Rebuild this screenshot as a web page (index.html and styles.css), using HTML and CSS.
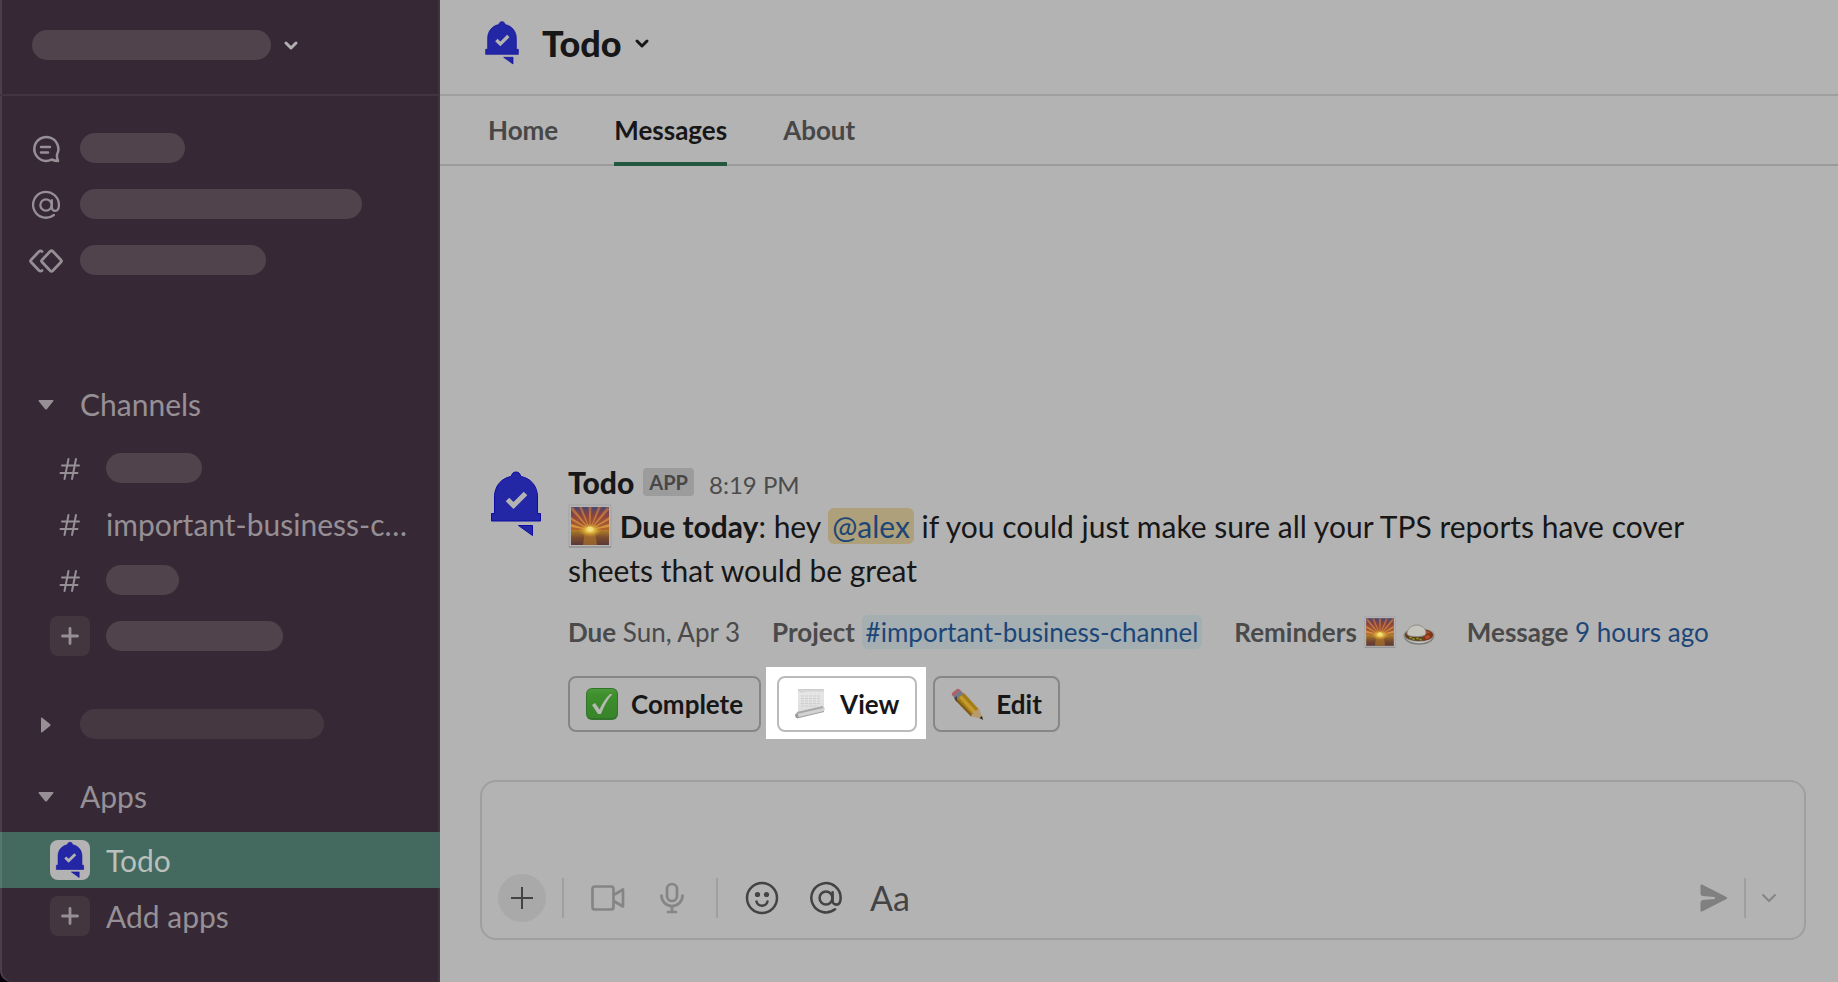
FILE: index.html
```html
<!DOCTYPE html>
<html lang="en">

<head>
    <meta charset="UTF-8">
    <meta name="viewport" content="width=device-width, initial-scale=1.0">
    <title>Todo</title>
    <link rel="stylesheet" href="styles.css">
</head>

<body>
    <!-- shared icons -->
    <svg class="sprite" aria-hidden="true">
        <defs>
            <linearGradient id="sky" x1="0" y1="0" x2="0" y2="1">
                <stop offset="0" stop-color="#47466e" />
                <stop offset=".35" stop-color="#8a4440" />
                <stop offset="1" stop-color="#b5652a" />
            </linearGradient>
            <linearGradient id="rays" gradientUnits="userSpaceOnUse" x1="0" y1="3" x2="0" y2="26">
                <stop offset="0" stop-color="#a0604c" />
                <stop offset=".5" stop-color="#cb7a3a" />
                <stop offset="1" stop-color="#d8a040" />
            </linearGradient>
            <linearGradient id="sea" x1="0" y1="0" x2="0" y2="1">
                <stop offset="0" stop-color="#b08026" />
                <stop offset=".5" stop-color="#7b4c2d" />
                <stop offset="1" stop-color="#5b3838" />
            </linearGradient>
            <radialGradient id="sun">
                <stop offset="0" stop-color="#fff3a0" />
                <stop offset=".4" stop-color="#e0b840" />
                <stop offset="1" stop-color="#c88a2c" stop-opacity="0" />
            </radialGradient>
            <linearGradient id="tick" x1="0" y1="0" x2="0" y2="1">
                <stop offset="0" stop-color="#4c9a3a" />
                <stop offset=".2" stop-color="#3f8f2c" />
                <stop offset="1" stop-color="#37842a" />
            </linearGradient>
            <linearGradient id="paper" x1="0" y1="0" x2="0" y2="1">
                <stop offset="0" stop-color="#c9c9c9" />
                <stop offset=".15" stop-color="#e6e6e6" />
                <stop offset="1" stop-color="#dcdcdc" />
            </linearGradient>
        </defs>
        <symbol id="bell" viewBox="0 0 72 72">
            <path d="M36 4c-2.600 0-4.500 1.800-4.500 4.400C21.500 10 14.500 18 14.500 29v16.500h-3V53h49v-7.500h-3V29C57.500 18 50.500 10 40.500 8.400 40.500 5.800 38.600 4 36 4z" fill="#2327a5" stroke="#0d0ba3" />
            <path d="M38.500 57.500h14v10z" fill="#2327a5" stroke="#0d0ba3" />
            <path d="M27.500 31.500l6 6 12-12" fill="none" stroke="#b3b3b3" stroke-width="5" />
        </symbol>
        <symbol id="chevron" viewBox="0 0 16 16">
            <path d="M3 6l5 5 5-5" fill="none" stroke="currentColor" stroke-width="3" stroke-linecap="round" stroke-linejoin="round" />
        </symbol>
        <symbol id="caret" viewBox="0 0 16 16">
            <path d="M1.300 3h13.400q1.300 0 .5 1.200L9 12q-1 1.200-2 0L.8 4.200Q0 3 1.300 3z" fill="currentColor" />
        </symbol>
        <symbol id="at" viewBox="0 0 36 36">
            <g fill="none" stroke="currentColor" stroke-width="2.700" stroke-linecap="round">
                <circle cx="18" cy="18" r="6.800" />
                <path d="M25 12v9a4 4 0 0 0 4 4c3 0 4.500-3 4.500-7a15.500 15.500 0 1 0-6 12" />
            </g>
        </symbol>
        <symbol id="hash" viewBox="0 0 24 24">
            <path d="M10.500 2L6.500 22M18 2l-4 20M4 8.500h17M2.500 16h17" fill="none" stroke="currentColor" stroke-width="2" stroke-linecap="round" />
        </symbol>
        <symbol id="plus" viewBox="0 0 24 24">
            <path d="M12 4.500v15M4.500 12h15" fill="none" stroke="currentColor" stroke-width="2.800" stroke-linecap="round" />
        </symbol>
        <symbol id="sunrise" viewBox="0 0 44 44">
            <path d="M1 1h42v42H1z" fill="#b6b6b6" stroke="#a2a2a2" />
            <path d="M1 43h42" stroke="#878787" />
            <path d="M3 3h38v23H3z" fill="url(#sky)" />
            <path d="M22 26L3 6V4l2-1zM22 26L11 3h3zM22 26L20.500 3h3zM22 26L30 3h3zM22 26L39 3l2 1v2zM22 26L3 13v3zM22 26L41 13v3zM22 26L3 20v3zM22 26l19-6v3z" fill="url(#rays)" />
            <path d="M3 26h38v15H3z" fill="url(#sea)" />
            <path d="M17 27h10l2 14H15z" fill="#b57c2c" opacity=".6" />
            <ellipse cx="22" cy="26" rx="12" ry="7" fill="url(#sun)" />
            <path d="M18.500 26a3.500 3.500 0 0 1 7 0z" fill="#f2dc7c" />
        </symbol>
    </svg>

    <div class="app">
        <aside class="sidebar">
            <button class="workspace" aria-label="Workspace menu">
                <span class="pill w-239"></span>
                <svg class="icon-16"><use href="#chevron" /></svg>
            </button>

            <nav class="nav">
                <a href="#" class="row" aria-label="Threads">
                    <svg class="icon-36" viewBox="0 0 36 36">
                        <g fill="none" stroke="currentColor" stroke-width="2.500" stroke-linecap="round" stroke-linejoin="round">
                            <path d="M29 23.500a12 12 0 1 0-11 6.500c2.500 0 4-.600 5.500-1.500 2.500 1 4.500 1.500 6.500 1.500-1-2.500-1.500-4.500-1-6.500z" />
                            <path d="M13 16h9M13 21.500h7" />
                        </g>
                    </svg>
                    <span class="pill w-105"></span>
                </a>
                <a href="#" class="row" aria-label="Mentions">
                    <svg class="icon-30"><use href="#at" /></svg>
                    <span class="pill w-282"></span>
                </a>
                <a href="#" class="row" aria-label="Slack Connect">
                    <svg class="icon-36" viewBox="0 0 36 36">
                        <path d="M14 8.500q-1.500-1.500-3 0l-8 8.500q-1 1 0 2l8 8.500q1.500 1.500 3 0M22 8.500q1.500-1.500 3 0l8 8.500q1 1 0 2l-8 8.500q-1.500 1.500-3 0l-8-8.500q-1-1 0-2z" fill="none" stroke="currentColor" stroke-width="2.700" stroke-linecap="round" stroke-linejoin="round" />
                    </svg>
                    <span class="pill w-186"></span>
                </a>
            </nav>

            <section class="section">
                <button class="row heading"><svg class="icon-16"><use href="#caret" /></svg>Channels</button>
                <a href="#" class="row item" aria-label="Channel"><svg class="icon-24"><use href="#hash" /></svg><span class="pill w-96"></span></a>
                <a href="#" class="row item"><svg class="icon-24"><use href="#hash" /></svg><span class="name">important-business-channel</span></a>
                <a href="#" class="row item" aria-label="Channel"><svg class="icon-24"><use href="#hash" /></svg><span class="pill w-73"></span></a>
                <a href="#" class="row item" aria-label="Add channels"><span class="tile"><svg class="icon-24"><use href="#plus" /></svg></span><span class="pill w-177"></span></a>
            </section>

            <section class="section collapsed">
                <button class="row heading" aria-label="Expand section"><svg class="icon-16 closed"><use href="#caret" /></svg><span class="pill faint w-244"></span></button>
            </section>

            <section class="section apps">
                <button class="row heading"><svg class="icon-16"><use href="#caret" /></svg>Apps</button>
                <a href="#" class="row item active"><span class="tile logo"><svg class="icon-40"><use href="#bell" /></svg></span><span class="name">Todo</span></a>
                <a href="#" class="row item"><span class="tile"><svg class="icon-24"><use href="#plus" /></svg></span><span class="name">Add apps</span></a>
            </section>
        </aside>

        <main class="main">
            <header class="header">
                <svg class="icon-48"><use href="#bell" /></svg>
                <button class="title">Todo <svg class="icon-16"><use href="#chevron" /></svg></button>
            </header>

            <nav class="tabs">
                <a href="#" class="tab">Home</a>
                <a href="#" class="tab current">Messages</a>
                <a href="#" class="tab">About</a>
            </nav>

            <div class="messages">
                <article class="message">
                    <svg class="avatar"><use href="#bell" /></svg>
                    <div class="content">
                        <div class="meta">
                            <span class="author">Todo</span>
                            <span class="badge">APP</span>
                            <a href="#" class="time">8:19 PM</a>
                        </div>
                        <p class="text"><svg class="emoji-44"><use href="#sunrise" /></svg> <b>Due today</b>: hey <a href="#" class="mention">@alex</a> if you could just make sure all your TPS reports have cover sheets that would be great</p>
                        <div class="context">
                            <span><b>Due</b> Sun, Apr 3</span>
                            <span><b>Project</b> <a href="#" class="channel">#important-business-channel</a></span>
                            <span class="reminders"><b>Reminders</b>
                                <svg class="icon-32"><use href="#sunrise" /></svg>
                                <svg class="icon-32" viewBox="0 0 32 32">
                                    <path d="M.500 19c0 13 31 13 31 0z" fill="#7c7c78" />
                                    <path d="M1.500 20c2 9.500 27 9.500 29 0z" fill="#c6c6c2" />
                                    <ellipse cx="16" cy="19" rx="15.500" ry="6.800" fill="#8d8a84" />
                                    <ellipse cx="16" cy="19" rx="14" ry="6" fill="#5d3d1e" />
                                    <path d="M20 13.500c6 0 9.500 2.500 9.500 5.500s-5 5.500-9.500 5.500z" fill="#863316" />
                                    <path d="M23 15l4 1-2 2zM22 20l4-1 1 3-4 1z" fill="#b4502d" />
                                    <path d="M4 17.500c0-5 5-8.500 10-8.500s9 4 9 7.500-4 4-9 4-10-.500-10-3z" fill="#c6c5bd" stroke="#8e8c84" />
                                    <path d="M7 21.500h1M10 23h1M14 22.500h1M17 23.500h1" stroke="#858a28" stroke-width="2" stroke-linecap="round" />
                                </svg>
                            </span>
                            <span><b>Message</b> <a href="#" class="link">9 hours ago</a></span>
                        </div>
                        <div class="actions">
                            <button class="btn">
                                <svg class="icon-32" viewBox="0 0 32 32">
                                    <rect width="32" height="32" rx="6" fill="#32752a" />
                                    <rect x="1" y="1" width="30" height="29" rx="5" fill="url(#tick)" />
                                    <path d="M6 17l3-2 4.500 6.500C16.500 15 20 9.500 24 6h2.500C21.500 11.500 18 18 15 26h-3z" fill="#b5b8b3" />
                                </svg>
                                Complete
                            </button>
                            <div class="spotlight">
                                <button class="btn">
                                    <svg class="icon-32" viewBox="0 0 32 32">
                                        <path d="M3 1h26v20L3 26z" fill="url(#paper)" />
                                        <path d="M5 4h5M6 8h19M6 10.500h19M6 13h19M6 15.500h19M6 18h17" stroke="#cdcdcd" stroke-dasharray="3 1" />
                                        <path d="M1 25l27-6q3 .5 1 4L2 30q-3-2-1-5z" fill="#d2d2d2" />
                                        <path d="M2 25l26-6" stroke="#a8a8a8" stroke-width="2" />
                                        <path d="M2 30l27-6.500" stroke="#999" />
                                        <path d="M.500 26q3-2 3 4h-2q-2-1-1-4z" fill="#999" />
                                    </svg>
                                    View
                                </button>
                            </div>
                            <button class="btn">
                                <svg class="icon-32" viewBox="0 0 32 32">
                                    <path d="M1 5l5-4q2-1 4 2l4 4-7 6-4-4Q0 7 1 5z" fill="#ad6268" />
                                    <path d="M8.500 2.500l5 4.500-7 6-4-4.500z" fill="#747b88" />
                                    <path d="M5 12l8-7 15.500 17-8 6.500z" fill="#a67c1b" />
                                    <path d="M8 9.500L10.500 7.500 26 24l-3 2.500z" fill="#c29b29" />
                                    <path d="M4 12l2-1 15.500 16-1.500 1.500z" fill="#7f5a17" />
                                    <path d="M20.500 28.500q-.5-3 2-3 0-3 3-3 .5-2 3-.500L32 31z" fill="#b89a70" />
                                    <path d="M28.500 30l2.500-2 1 4z" fill="#292929" />
                                    <path d="M3 10l3-2v6z" fill="#444" />
                                </svg>
                                Edit
                            </button>
                        </div>
                    </div>
                </article>
            </div>

            <form class="composer">
                <textarea class="input" rows="2" aria-label="Message Todo"></textarea>
                <div class="toolbar">
                    <button type="button" class="tool add" aria-label="Attach">
                        <svg class="icon-24" viewBox="0 0 24 24"><path d="M12 1v22M1 12h22" stroke="currentColor" stroke-width="2" /></svg>
                    </button>
                    <span class="divider"></span>
                    <button type="button" class="tool muted" aria-label="Record video">
                        <svg class="icon-36" viewBox="0 0 36 36"><path d="M5 6.500h16q2.500 0 2.500 2.500v18q0 2.500-2.500 2.500H5Q2.500 29.500 2.500 27V9Q2.500 6.500 5 6.500zM24.500 14.500l8.500-5v17l-8.500-5" fill="none" stroke="currentColor" stroke-width="2.700" stroke-linejoin="round" /></svg>
                    </button>
                    <button type="button" class="tool muted" aria-label="Record audio">
                        <svg class="icon-36" viewBox="0 0 36 36"><path d="M18 4a5 5 0 0 1 5 5v7a5 5 0 0 1-10 0V9a5 5 0 0 1 5-5zM7.500 15.500a10.500 10.500 0 0 0 21 0M18 27v5M14 32h8" fill="none" stroke="currentColor" stroke-width="2.700" stroke-linecap="round" /></svg>
                    </button>
                    <span class="divider"></span>
                    <button type="button" class="tool" aria-label="Emoji">
                        <svg class="icon-36" viewBox="0 0 36 36">
                            <g fill="none" stroke="currentColor" stroke-width="2.500" stroke-linecap="round">
                                <circle cx="18" cy="18" r="15" />
                                <path d="M12.500 21.500c1.500 5.500 9.500 5.500 11 0" />
                            </g>
                            <circle cx="13.500" cy="14.500" r="2.600" fill="currentColor" />
                            <circle cx="22.500" cy="14.500" r="2.600" fill="currentColor" />
                        </svg>
                    </button>
                    <button type="button" class="tool" aria-label="Mention someone">
                        <svg class="icon-34"><use href="#at" /></svg>
                    </button>
                    <button type="button" class="tool" aria-label="Formatting">
                        <span class="format">Aa</span>
                    </button>
                    <button class="tool send" aria-label="Send">
                        <svg class="icon-28" viewBox="0 0 28 28"><path d="M2 .500L26.500 13q1.500 1 0 2L2 27.500Q.500 28 .500 26.500v-8q0-2 2-2.500l12-1q1.500-1 0-2l-12-1q-2-.500-2-2.500v-8Q.500 0 2 .500z" fill="currentColor" /></svg>
                    </button>
                    <span class="divider"></span>
                    <button type="button" class="tool more" aria-label="Schedule">
                        <svg class="icon-16" viewBox="0 0 16 16"><path d="M2 5l6 6 6-6" fill="none" stroke="currentColor" stroke-width="2" stroke-linecap="round" /></svg>
                    </button>
                </div>
            </form>
        </main>
    </div>
</body>

</html>
```
FILE: styles.css
```css
* {
    box-sizing: border-box;
    padding: 0;
    margin: 0;
}

body {
    background: #0a000a;
    color: #171718;
    font-family: Lato, "Liberation Sans", sans-serif;
    font-size: 30px;
    line-height: 44px;
}

a {
    color: inherit;
    text-decoration: none;
}

button {
    border: 0;
    background: none;
    color: inherit;
    font: inherit;
    cursor: pointer;
}

svg {
    flex: none;
}

.sprite {
    position: absolute;
    width: 0;
    height: 0;
}

.icon-16 { width: 16px; height: 16px; }
.icon-24 { width: 24px; height: 24px; }
.icon-28 { width: 28px; height: 28px; }
.icon-30 { width: 30px; height: 30px; }
.icon-32 { width: 32px; height: 32px; }
.icon-34 { width: 34px; height: 34px; }
.icon-36 { width: 36px; height: 36px; }
.icon-40 { width: 40px; height: 40px; }
.icon-48 { width: 48px; height: 48px; }

.app {
    display: flex;
    min-height: 100vh;
}

/* sidebar */
.sidebar {
    flex: none;
    width: 440px;
    background: #362935;
    color: #969096;
    box-shadow: inset 2px 0 #4b3f49, inset -2px 0 #40343f;
    border-bottom-left-radius: 12px;
}

.workspace {
    display: flex;
    align-items: center;
    gap: 12px;
    width: 100%;
    height: 96px;
    padding: 0 32px 4px;
    border-bottom: 2px solid #43353f;
    color: #b3b0b3;
}

.pill {
    height: 30px;
    border-radius: 15px;
    background: #50434b;
}

.faint { background: #463841; }

.w-73 { width: 73px; }
.w-96 { width: 96px; }
.w-105 { width: 105px; }
.w-177 { width: 177px; }
.w-186 { width: 186px; }
.w-239 { width: 239px; }
.w-244 { width: 244px; }
.w-282 { width: 282px; }

.row {
    display: grid;
    grid-template-columns: 68px 1fr;
    align-items: center;
    width: 100%;
    height: 56px;
    padding: 0 28px 0 12px;
    text-align: left;
}

.row > svg,
.row > .tile {
    justify-self: center;
}

.row > svg {
    margin-top: 2px;
}

.nav {
    padding: 24px 0 88px;
}

.heading {
    margin-bottom: 8px;
}

.closed {
    transform: rotate(-90deg);
}

.item {
    grid-template-columns: 72px 1fr;
    padding-left: 34px;
}

.name {
    overflow: hidden;
    text-overflow: ellipsis;
    white-space: nowrap;
}

.tile {
    display: grid;
    place-items: center;
    width: 40px;
    height: 40px;
    border-radius: 8px;
    background: #43363f;
}

.collapsed {
    padding: 32px 0 8px;
}

.active {
    background: #44695f;
    box-shadow: inset 2px 0 #56776e;
    color: #b9c0bd;
}

.logo {
    background: #b3b3b3;
}

/* main column */
.main {
    display: flex;
    flex: 1;
    flex-direction: column;
    min-width: 0;
    background: #b3b3b3;
}

.header {
    display: flex;
    align-items: center;
    gap: 16px;
    height: 96px;
    padding: 0 38px 8px;
    border-bottom: 2px solid #9f9f9f;
}

.title {
    display: flex;
    align-items: center;
    gap: 12px;
    font-size: 36px;
    font-weight: 900;
}

.tabs {
    display: flex;
    gap: 56px;
    height: 70px;
    padding: 0 48px;
    box-shadow: inset 0 -2px #9b9b9b;
}

.tab {
    padding-top: 12px;
    color: #474748;
    font-size: 26px;
    font-weight: 700;
}

.current {
    border-bottom: 4px solid #24573f;
    color: #171718;
}

.messages {
    display: flex;
    flex: 1;
    flex-direction: column;
    justify-content: flex-end;
    padding: 0 40px 48px;
}

.message {
    display: flex;
    gap: 16px;
}

.avatar {
    width: 72px;
    height: 72px;
    margin-top: 8px;
}

.content {
    flex: 1;
    min-width: 0;
}

.meta {
    display: flex;
    align-items: baseline;
    gap: 9px;
    height: 44px;
}

.author {
    font-weight: 900;
}

.badge {
    align-self: center;
    padding: 0 6px;
    border-radius: 4px;
    background: #9c9c9c;
    color: #474748;
    font-size: 20px;
    font-weight: 700;
    line-height: 28px;
}

.time {
    margin-left: 6px;
    color: #4b4b4c;
    font-size: 24px;
}

.text {
    max-width: 1200px;
}

.emoji-44 {
    width: 44px;
    height: 44px;
    vertical-align: bottom;
}

.mention {
    padding: 0 4px;
    border-radius: 6px;
    background: #aea07a;
    color: #1c4678;
}

.context {
    display: flex;
    flex-wrap: wrap;
    column-gap: 32px;
    margin: 18px 0 22px;
    color: #4a4a4b;
    font-size: 26px;
    line-height: 44px;
}

.channel {
    padding: 1px 4px;
    border-radius: 6px;
    background: #a5aeb1;
    color: #1c4678;
}

.link {
    color: #1c4678;
}

.reminders {
    display: flex;
    align-items: center;
    gap: 7px;
}

.actions {
    display: flex;
    gap: 16px;
}

.btn {
    display: flex;
    align-items: center;
    gap: 13px;
    height: 56px;
    padding: 0 16px;
    border: 2px solid #868686;
    border-radius: 8px;
    font-size: 26px;
    font-weight: 700;
}

.spotlight {
    margin: -9px -9px -7px -11px;
    padding: 9px 9px 7px 11px;
    background: #fff;
}

.spotlight .btn {
    border-color: #bbb;
}

/* composer */
.composer {
    margin: 0 32px 42px 40px;
    padding: 0 12px 16px 16px;
    border: 2px solid #9f9f9f;
    border-radius: 16px;
}

.input {
    display: block;
    width: 100%;
    height: 92px;
    padding: 16px 8px;
    border: 0;
    outline: 0;
    background: none;
    color: inherit;
    font: inherit;
    resize: none;
}

.toolbar {
    display: flex;
    align-items: center;
}

.tool {
    display: grid;
    place-items: center;
    width: 64px;
    height: 48px;
    color: #434344;
}

.add {
    width: 48px;
    margin-right: 4px;
    border-radius: 50%;
    background: #a9a9a9;
}

.muted {
    color: #858585;
}

.divider {
    width: 2px;
    height: 40px;
    margin: 0 12px;
    background: #9f9f9f;
}

.format {
    font-size: 34px;
}

.send {
    width: 48px;
    margin-left: auto;
    color: #808080;
}

.send + .divider {
    margin: 0 0 0 6px;
}

.more {
    width: 46px;
    color: #858585;
}
```
